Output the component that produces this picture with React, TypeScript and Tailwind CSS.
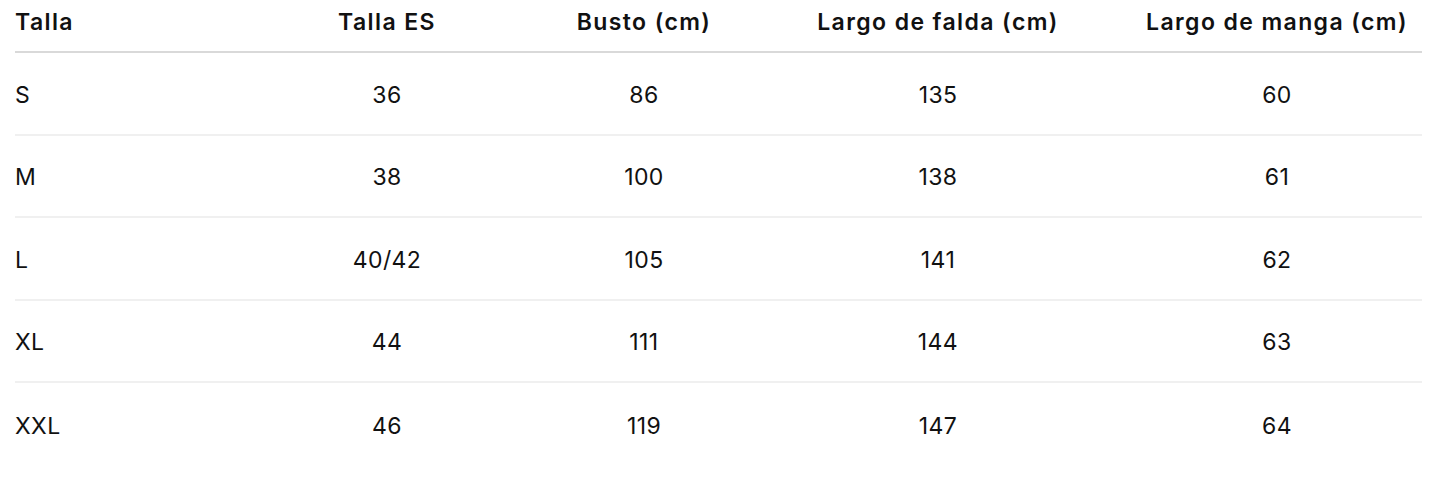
import React from "react";

const rows = [
  ["S", "36", "86", "135", "60"],
  ["M", "38", "100", "138", "61"],
  ["L", "40/42", "105", "141", "62"],
  ["XL", "44", "111", "144", "63"],
  ["XXL", "46", "119", "147", "64"],
];

const headers = ["Talla", "Talla ES", "Busto (cm)", "Largo de falda (cm)", "Largo de manga (cm)"];

const cols = "grid grid-cols-[215px_314px_200px_388px_290px]";

export default function App() {
  return (
    <div className="w-[1445px] h-[488px] bg-white pl-[15px] text-[#111]" style={{ fontFamily: "Inter, 'Noto Sans', sans-serif" }}>
      <div className="w-[1407px]">
        <div className={`${cols} h-[53px] border-b-2 border-[#d9d9d9] text-[23px] font-semibold tracking-[1.4px]`}>
          {headers.map((h, i) => (
            <div key={i} className={`pt-[6px] leading-[32px] ${i === 0 ? "text-left" : "text-center"}`}>
              {h}
            </div>
          ))}
        </div>
        {rows.map((r, ri) => (
          <div
            key={ri}
            className={`${cols} h-[82.5px] pt-[3px] items-center text-[23px] tracking-[0.4px] ${ri < rows.length - 1 ? "border-b-2 border-[#f0f0f0]" : ""}`}
          >
            {r.map((c, i) => (
              <div key={i} className={i === 0 ? "text-left" : "text-center"}>
                {c}
              </div>
            ))}
          </div>
        ))}
      </div>
    </div>
  );
}
